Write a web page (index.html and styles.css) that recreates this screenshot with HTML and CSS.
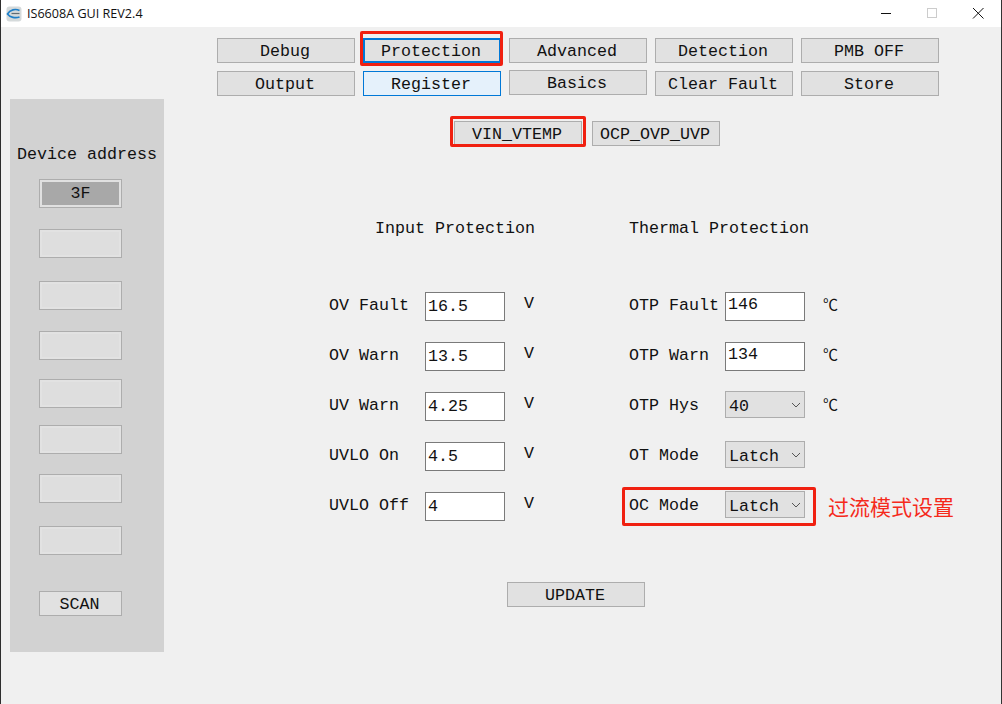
FILE: index.html
```html
<!DOCTYPE html>
<html lang="en">
<head>
<meta charset="utf-8">
<title>IS6608A GUI REV2.4</title>
<link rel="stylesheet" href="styles.css">
</head>
<body>
<div class="app">
  <header class="titlebar">
    <svg class="logo" viewBox="0 0 16 16" width="16" height="16" aria-hidden="true">
      <rect x="0.500" y="0.500" width="15" height="15" rx="3" fill="#d5dadb"/>
      <path d="M13.500 4.500C9.500 2.500 4 3.500 1.500 8c2.500 3.500 8 4.500 12 3" fill="none" stroke="#1f7fc8" stroke-width="1.700"/>
      <path d="M5.500 7.500h8" stroke="#5f6b73" stroke-width="1.200"/>
    </svg>
    <span class="title">IS6608A GUI REV2.4</span>
    <div class="winbtns">
      <svg class="winbtn" viewBox="0 0 46 27" width="46" height="27" aria-hidden="true"><path d="M18 13.500h10" stroke="#111" fill="none"/></svg>
      <svg class="winbtn" viewBox="0 0 46 27" width="46" height="27" aria-hidden="true"><rect x="18.500" y="8.500" width="9" height="9" stroke="#ccc" fill="none"/></svg>
      <svg class="winbtn" viewBox="0 0 46 27" width="46" height="27" aria-hidden="true"><path d="M18 8l10.500 10.500M28.500 8L18 18.500" stroke="#111" fill="none"/></svg>
    </div>
  </header>
  <div class="content">
    <aside class="sidebar">
      <div class="side-title">Device address</div>
      <div class="addr addr-active">3F</div>
      <div class="addr"></div>
      <div class="addr"></div>
      <div class="addr"></div>
      <div class="addr"></div>
      <div class="addr"></div>
      <div class="addr"></div>
      <div class="addr"></div>
      <button class="btn scan">SCAN</button>
    </aside>
    <main class="main">
      <nav class="nav">
        <button class="btn">Debug</button>
        <button class="btn btn-focus red-mark">Protection</button>
        <button class="btn">Advanced</button>
        <button class="btn">Detection</button>
        <button class="btn">PMB OFF</button>
        <button class="btn">Output</button>
        <button class="btn btn-hover">Register</button>
        <button class="btn btn-raised">Basics</button>
        <button class="btn">Clear Fault</button>
        <button class="btn">Store</button>
      </nav>
      <div class="subtabs">
        <button class="btn subtab red-mark-sub">VIN_VTEMP</button>
        <button class="btn subtab">OCP_OVP_UVP</button>
      </div>
      <div class="form">
        <section class="col col-left">
          <h2 class="col-title">Input Protection</h2>
          <div class="row"><label class="lbl">OV Fault</label><input class="inp" value="16.5"><span class="unit">V</span></div>
          <div class="row"><label class="lbl">OV Warn</label><input class="inp" value="13.5"><span class="unit">V</span></div>
          <div class="row"><label class="lbl">UV Warn</label><input class="inp" value="4.25"><span class="unit">V</span></div>
          <div class="row"><label class="lbl">UVLO On</label><input class="inp" value="4.5"><span class="unit">V</span></div>
          <div class="row"><label class="lbl">UVLO Off</label><input class="inp" value="4"><span class="unit">V</span></div>
        </section>
        <section class="col col-right">
          <h2 class="col-title">Thermal Protection</h2>
          <div class="row"><label class="lbl">OTP Fault</label><input class="inp inp-high" value="146"><span class="unit unit-c">℃</span></div>
          <div class="row"><label class="lbl">OTP Warn</label><input class="inp inp-high" value="134"><span class="unit unit-c">℃</span></div>
          <div class="row"><label class="lbl">OTP Hys</label><div class="sel"><select class="sel-in"><option>40</option></select><svg class="chev" viewBox="0 0 10 6" width="10" height="6" aria-hidden="true"><path d="M1 1l4 4 4-4" fill="none" stroke="#555"/></svg></div><span class="unit unit-c">℃</span></div>
          <div class="row"><label class="lbl">OT Mode</label><div class="sel"><select class="sel-in"><option>Latch</option></select><svg class="chev" viewBox="0 0 10 6" width="10" height="6" aria-hidden="true"><path d="M1 1l4 4 4-4" fill="none" stroke="#555"/></svg></div></div>
          <div class="row row-mark"><label class="lbl">OC Mode</label><div class="sel"><select class="sel-in"><option>Latch</option></select><svg class="chev" viewBox="0 0 10 6" width="10" height="6" aria-hidden="true"><path d="M1 1l4 4 4-4" fill="none" stroke="#555"/></svg></div><span class="note">过流模式设置</span></div>
        </section>
      </div>
      <button class="btn update">UPDATE</button>
    </main>
  </div>
</div>
</body>
</html>
```

FILE: styles.css
```css
*, *::after { box-sizing: border-box; }
html, body { margin: 0; padding: 0; }
body { width: 1002px; height: 704px; overflow: hidden; background: #f0f0f0; }
.app {
  width: 1002px; height: 704px; display: flex; flex-direction: column;
  border-left: 1px solid #2e2e2e; border-right: 1px solid #333;
  font: 16.67px "Liberation Mono", "Noto Sans CJK SC", monospace; color: #111;
}
.titlebar { height: 27px; background: #fff; display: flex; align-items: center; padding-left: 5px; flex: none; }
.logo { flex: none; }
.title { font: 12.6px "Open Sans", "Liberation Sans", sans-serif; margin-left: 5px; color: #111; }
.winbtns { margin-left: auto; display: flex; }
.winbtn { display: block; }

.content { flex: 1; display: flex; align-items: flex-start; background: #f0f0f0; padding-left: 9px; }

.sidebar {
  width: 154px; height: 553px; margin-top: 72px; background: #d2d2d2; flex: none;
  display: grid; justify-items: start; padding-left: 29px;
  grid-template-rows: 80px 29px 50px 52px 50px 48px 46px 49px 52px 61px;
}
.side-title { width: 154px; margin-left: -29px; text-align: center; padding-top: 45px; line-height: 22px; white-space: pre; }
.addr { width: 83px; height: 29px; border: 1px solid #adadad; background: #dedede; box-shadow: inset 0 0 0 2px #e2e2e2; text-align: center; line-height: 27px; align-self: end; }
.addr-active { background: #a8a8a8; box-shadow: inset 0 0 0 2px #e0e0e0; }
.scan { width: 83px; align-self: end; }

.main { margin-left: 53px; padding-top: 11px; display: flex; flex-direction: column; align-items: flex-start; }
.btn {
  height: 25px; background: #e1e1e1; border: 1px solid #adadad; border-radius: 0; padding: 1px 2px 0 0; color: #111;
  font: inherit; white-space: pre; text-align: center;
}
.nav { display: grid; grid-template-columns: repeat(5, 138px); grid-auto-rows: 25px; gap: 8px; }
.btn-focus { border: 2px solid #0078d7; position: relative; }
.btn-hover { background: #e5f1fb; border-color: #0078d7; }
.btn-raised { margin-top: -1px; margin-bottom: 1px; }
.red-mark::after {
  content: ""; position: absolute; left: -5px; top: -9px; width: 143px; height: 35px;
  border: 3px solid #f02010; border-radius: 2px;
}
.subtabs { display: flex; gap: 10px; margin: 25px 0 0 237px; }
.subtab { width: 128px; }
.red-mark-sub { position: relative; }
.red-mark-sub::after {
  content: ""; position: absolute; left: -5px; top: -6px; width: 136px; height: 31px;
  border: 3px solid #f02010; border-radius: 2px;
}

.form { display: grid; grid-template-columns: 300px 300px; margin: 70px 0 0 112px; }
.col-title { font: inherit; margin: 0 0 51px; height: 25px; line-height: 26px; white-space: pre; }
.col-left .col-title { padding-left: 46px; }
.row { display: flex; align-items: center; height: 29px; margin-bottom: 21px; position: relative; }
.row:last-child { margin-bottom: 0; }
.lbl { width: 96px; flex: none; white-space: pre; margin-top: -2px; }
.inp { width: 80px; height: 29px; border: 1px solid #7a7a7a; background: #fff; padding: 0 2px; font: inherit; color: #111; flex: none; border-radius: 0; outline: none; }
.inp-high { padding-bottom: 5px; }
.unit { margin-left: 19px; margin-top: -6px; }
.unit-c { margin-left: 18px; margin-top: -6px; font-size: 15px; }
.sel { width: 80px; height: 27px; position: relative; flex: none; margin-top: -4px; }
.sel-in { appearance: none; -webkit-appearance: none; width: 80px; height: 27px; background: #e1e1e1; border: 1px solid #adadad; border-radius: 0; padding: 3px 0 0 3px; font: inherit; color: #111; display: block; }
.chev { position: absolute; right: 4px; top: 11px; }
.note { position: absolute; left: 199px; top: 1px; font: 21px/26px "Noto Sans CJK SC", sans-serif; color: #f52a1c; white-space: pre; }
.row-mark::after {
  content: ""; position: absolute; left: -7px; top: -5px; width: 194px; height: 39px;
  border: 3px solid #f02010; border-radius: 2px;
}
.update { width: 138px; margin: 61px 0 0 290px; }
```
